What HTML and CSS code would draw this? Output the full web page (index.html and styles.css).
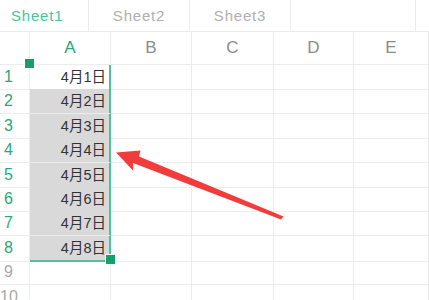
FILE: index.html
```html
<!DOCTYPE html>
<html lang="zh-CN">
<head>
  <meta charset="UTF-8">
  <title>Sheet1</title>
  <link rel="stylesheet" href="styles.css">
</head>
<body>
  <div class="tabs">
    <div class="tab tab-first active">Sheet1</div>
    <div class="tab">Sheet2</div>
    <div class="tab">Sheet3</div>
    <div class="tab tab-blank"></div>
    <div class="tab tab-rest"></div>
  </div>
  <div class="sheet">
    <div class="row head">
      <div class="num"></div>
      <div class="cell col-a">A</div>
      <div class="cell">B</div>
      <div class="cell">C</div>
      <div class="cell">D</div>
      <div class="cell">E</div>
    </div>
    <div class="row"><div class="num on">1</div><div class="cell val sel">4月1日</div><div class="cell"></div><div class="cell"></div><div class="cell"></div><div class="cell"></div></div>
    <div class="row"><div class="num on">2</div><div class="cell val sel grey">4月2日</div><div class="cell"></div><div class="cell"></div><div class="cell"></div><div class="cell"></div></div>
    <div class="row"><div class="num on">3</div><div class="cell val sel grey">4月3日</div><div class="cell"></div><div class="cell"></div><div class="cell"></div><div class="cell"></div></div>
    <div class="row"><div class="num on">4</div><div class="cell val sel grey">4月4日</div><div class="cell"></div><div class="cell"></div><div class="cell"></div><div class="cell"></div></div>
    <div class="row"><div class="num on">5</div><div class="cell val sel grey">4月5日</div><div class="cell"></div><div class="cell"></div><div class="cell"></div><div class="cell"></div></div>
    <div class="row"><div class="num on">6</div><div class="cell val sel grey">4月6日</div><div class="cell"></div><div class="cell"></div><div class="cell"></div><div class="cell"></div></div>
    <div class="row"><div class="num on">7</div><div class="cell val sel grey">4月7日</div><div class="cell"></div><div class="cell"></div><div class="cell"></div><div class="cell"></div></div>
    <div class="row"><div class="num on">8</div><div class="cell val sel grey last">4月8日</div><div class="cell"></div><div class="cell"></div><div class="cell"></div><div class="cell"></div></div>
    <div class="row"><div class="num">9</div><div class="cell"></div><div class="cell"></div><div class="cell"></div><div class="cell"></div><div class="cell"></div></div>
    <div class="row"><div class="num">10</div><div class="cell"></div><div class="cell"></div><div class="cell"></div><div class="cell"></div><div class="cell"></div></div>

    <div class="handle handle-top"></div>
    <div class="handle handle-bottom"></div>

    <svg class="arrow" width="429" height="300" viewBox="0 0 429 300">
      <polygon points="116,152.5 140.5,150.5 139,156.5 283.5,216.5 281,219.5 133,163 133,170.5" fill="#f23c3c"/>
    </svg>
  </div>
</body>
</html>
```

FILE: styles.css
```css
html, body { margin: 0; padding: 0; background: #fff; overflow: hidden; }
body { width: 429px; height: 300px; font-family: "Liberation Sans", Arial, "Noto Sans CJK SC", sans-serif; }

.tabs { display: flex; height: 32px; border-bottom: 1px solid #ebebeb; box-sizing: border-box; }
.tab { width: 101px; flex: none; border-right: 1px solid #ebebeb; box-sizing: border-box; text-align: center; line-height: 31px; font-size: 15px; letter-spacing: 0.8px; color: #b0b0b0; }
.tab-first { width: 89px; text-align: left; padding-left: 11px; }
.tab-blank { width: 125px; }
.tab-rest { flex: 1; border-right: none; }
.tab.active { color: #4cc39c; }

.sheet { position: relative; }
.row { display: grid; grid-template-columns: 30px 81px 81px 82px 80px 1fr; height: 24.4px; }
.row.head { height: 33px; }
.num, .cell { border-right: 1px solid #ececec; border-bottom: 1px solid #ececec; box-sizing: border-box; }
.num { text-align: center; padding-right: 12px; font-size: 16px; line-height: 24px; color: #a8a8a8; }
.num.on { color: #2aa77a; }
.head .cell, .head .num { line-height: 32px; text-align: center; font-size: 17px; color: #8c8c8c; }
.head .col-a { color: #2aa77a; }

.val { text-align: right; padding-right: 3px; font-size: 14.5px; line-height: 24px; color: #333; }
.sel { border-right: 2px solid #4fc19c; }
.grey { background: #d9d9d9; }
.last { border-bottom: 2px solid #4fc19c; }

.handle { position: absolute; width: 9px; height: 9px; background: #14a06c; border: 1px solid #fff; }
.handle-top { left: 24px; top: 26px; }
.handle-bottom { left: 105px; top: 222px; }

.arrow { position: absolute; left: 0; top: -32px; pointer-events: none; }
```
